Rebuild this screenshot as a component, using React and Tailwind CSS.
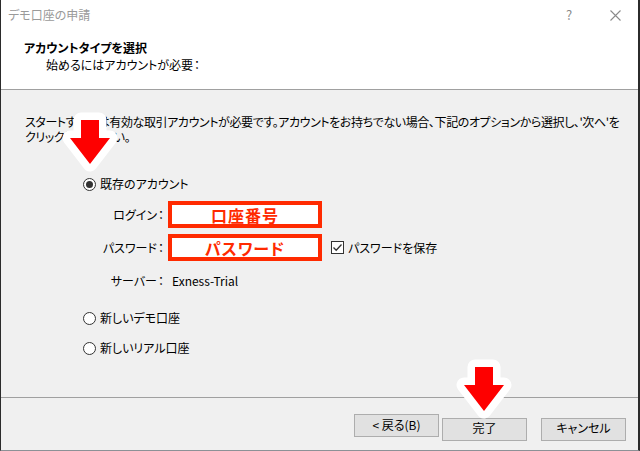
import React from 'react';

const RED = '#ff2a00';

// Red down arrow with a thick white halo
const DownArrow = ({ x, y }) => (
  <svg className="absolute pointer-events-none" style={{ left: x - 30, top: y - 12 }} width="60" height="64" viewBox="0 0 60 64">
    <path d="M21 12 H39 V30 H50 L30 56 L10 30 H21 Z" fill="#fff" stroke="#fff" strokeWidth="15" strokeLinejoin="round" />
    <path d="M21 12 H39 V30 H50 L30 56 L10 30 H21 Z" fill="#fe0000" />
  </svg>
);

const Colon = () => <span className="ml-[1px]">：</span>;

const Radio = ({ checked, label }) => (
  <div className="flex items-center h-4">
    <span className="w-[13px] h-[13px] rounded-full border border-[#333] bg-white flex items-center justify-center">
      {checked && <span className="w-[7px] h-[7px] rounded-full bg-[#333]" />}
    </span>
    <span className="ml-[4px] text-[12px] text-black">{label}</span>
  </div>
);

const RedBox = ({ text }) => (
  <div className="w-[154px] h-[27px] border-4 bg-white flex items-center justify-center" style={{ borderColor: RED }}>
    <span className="text-[16px] font-bold leading-none tracking-[1px]" style={{ color: RED }}>{text}</span>
  </div>
);

const Button = ({ children }) => (
  <button className="w-[85px] h-[23px] pb-[2px] bg-[#e1e1e1] border border-[#adadad] text-[12px] text-black leading-none">
    {children}
  </button>
);

export default function App() {
  return (
    <div
      className="relative w-[640px] h-[451px] overflow-hidden bg-[#f0f0f0] border-l border-l-[#2b2b2b] border-r-2 border-r-[#2b2b2b] border-b border-b-[#8c9196] flex flex-col text-black"
      style={{ fontFamily: '"Noto Sans CJK JP", "Noto Sans", sans-serif', fontFeatureSettings: '"palt"' }}
    >
      <div className="absolute left-[-1px] top-[32px] w-[1px] h-[28px] bg-[#22b022]" />

      {/* title bar + wizard header */}
      <div className="h-[90px] bg-white border-b border-b-[#a0a0a0]">
        <div className="h-[30px] flex items-center">
          <span className="pl-[7px] text-[12px] text-[#9a9a9a]">デモ口座の申請</span>
          <div className="ml-auto flex h-full">
            <span className="w-[46px] flex items-center justify-center text-[13px] text-[#8a8a8a]">?</span>
            <span className="w-[46px] flex items-center justify-center">
              <svg width="11" height="11" viewBox="0 0 11 11">
                <path d="M0.5 0.5 L10.5 10.5 M10.5 0.5 L0.5 10.5" stroke="#8a8a8a" strokeWidth="1.1" />
              </svg>
            </span>
          </div>
        </div>
        <div className="mt-[10px] pl-[23px] text-[12px] leading-[15px] font-bold">アカウントタイプを選択</div>
        <div className="mt-[2px] pl-[45px] text-[12px] leading-[15px]">始めるにはアカウントが必要<Colon /></div>
      </div>

      {/* body */}
      <div className="flex-1 flex flex-col">
        <p className="pt-[24px] pl-[24px] text-[12px] leading-[15px] whitespace-nowrap tracking-[-0.4px]">
          スタートするには有効な取引アカウントが必要です。アカウントをお持ちでない場合、下記のオプションから選択し、'次へ'を
          <br />
          クリックしてください。
        </p>

        <div className="mt-[32px] ml-[82px]">
          <Radio checked label="既存のアカウント" />
        </div>

        <div className="mt-[9px] flex items-center">
          <span className="w-[163px] text-right text-[12px]">ログイン<Colon /></span>
          <div className="ml-[4px]"><RedBox text="口座番号" /></div>
        </div>

        <div className="mt-[6px] flex items-center">
          <span className="w-[163px] text-right text-[12px]">パスワード<Colon /></span>
          <div className="ml-[4px]"><RedBox text="パスワード" /></div>
          <span className="ml-[9px] w-[13px] h-[13px] border border-[#333] bg-white flex items-center justify-center">
            <svg width="11" height="11" viewBox="0 0 11 11">
              <path d="M1.5 5.5 L4.2 8.3 L9.5 2.5" fill="none" stroke="#333" strokeWidth="1.3" />
            </svg>
          </span>
          <span className="ml-[4px] text-[12px]">パスワードを保存</span>
        </div>

        <div className="mt-[12px] flex items-center h-4">
          <span className="w-[163px] text-right text-[12px]">サーバー<Colon /></span>
          <span className="ml-[8px] text-[12px]">Exness-Trial</span>
        </div>

        <div className="mt-[21px] ml-[82px]">
          <Radio label="新しいデモ口座" />
        </div>
        <div className="mt-[14px] ml-[82px]">
          <Radio label="新しいリアル口座" />
        </div>
      </div>

      {/* footer buttons */}
      <div className="h-[53px] border-t border-t-[#a0a0a0] pt-[16px] pr-[12px] flex justify-end items-start">
        <Button>&lt; 戻る(B)</Button>
        <div className="ml-[3px]"><Button>完了</Button></div>
        <div className="ml-[14px]"><Button>キャンセル</Button></div>
      </div>

      <DownArrow x={89} y={120} />
      <DownArrow x={483} y={367} />
    </div>
  );
}
